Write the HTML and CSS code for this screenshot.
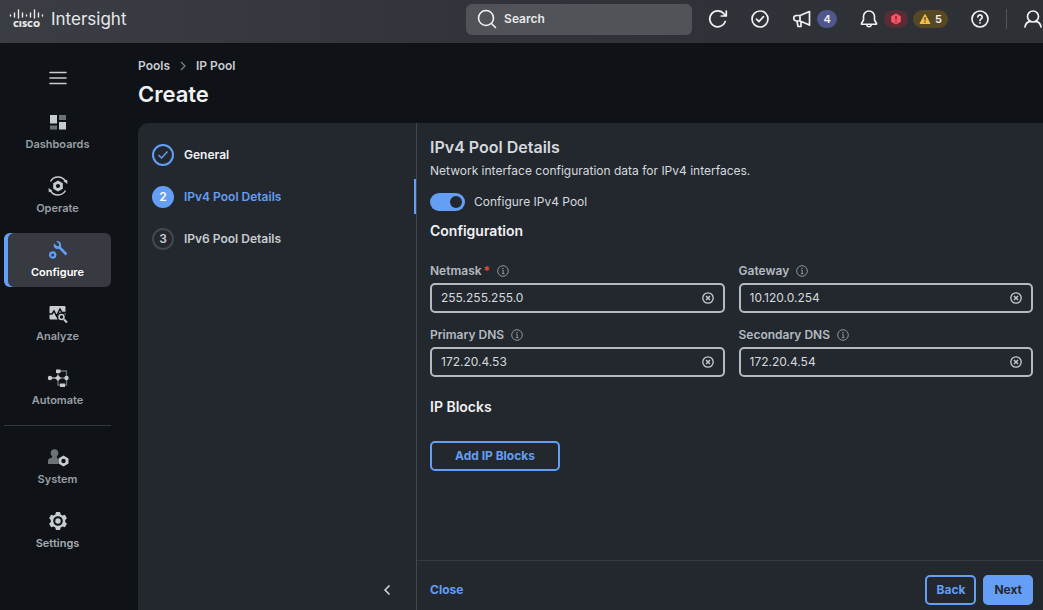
FILE: index.html
```html
<!DOCTYPE html>
<html lang="en">
<head>
    <meta charset="UTF-8">
    <meta name="viewport" content="width=device-width, initial-scale=1.0">
    <title>Create IP Pool</title>
    <link rel="stylesheet" href="styles.css">
</head>
<body>
    <!-- Shared icons -->
    <svg class="sprite" aria-hidden="true">
        <symbol id="info" viewBox="0 0 12 12">
            <circle cx="6" cy="6" r="5.3" fill="none" stroke="currentColor" />
            <path d="M5 5.2h1.2v3.3M4.8 8.6h2.7" fill="none" stroke="currentColor" />
            <circle cx="6" cy="3.4" r=".7" fill="currentColor" />
        </symbol>
        <symbol id="clear" viewBox="0 0 12 12">
            <circle cx="6" cy="6" r="5.2" fill="none" stroke="currentColor" stroke-width="1.3" />
            <path d="M4 4l4 4M8 4L4 8" fill="none" stroke="currentColor" stroke-width="1.4" />
        </symbol>
        <symbol id="gear" viewBox="0 0 20 20">
            <path fill="currentColor" fill-rule="evenodd" d="M8 1h4l.7 2.4 1.7 1 2.5-.6 2 3.4L17.2 9v2l1.7 1.8-2 3.4-2.5-.6-1.7 1L12 19H8l-.7-2.4-1.7-1-2.5.6-2-3.4L2.800 11V9L1.1 7.2l2-3.4 2.5.6 1.7-1zM10 5.2a4.8 4.8 0 1 0 0 9.6a4.8 4.8 0 0 0 0-9.6z" />
            <circle cx="10" cy="10" r="2.7" fill="currentColor" />
        </symbol>
    </svg>

    <header class="topbar">
        <a class="brand" href="#">
            <svg class="cisco" width="36" height="20" viewBox="0 0 36 20" role="img" aria-label="Cisco">
                <g stroke="#e6e8ea" stroke-width="1.4" stroke-linecap="round">
                    <path d="M1.5 6v1M5.5 4v4M9.5 1v8M13.5 4v4M17.5 6v1M21.5 4v4M25.5 1v8M29.5 4v4M33.5 6v1" />
                </g>
                <text class="cisco-name" x="17.5" y="18" text-anchor="middle">CISCO</text>
            </svg>
            <span class="product">Intersight</span>
        </a>
        <label class="search">
            <svg width="20" height="20" viewBox="0 0 20 20" fill="none" stroke="currentColor" stroke-width="1.6" stroke-linecap="round">
                <circle cx="9" cy="9" r="7.5" />
                <path d="M14.5 14.5l4 4" />
            </svg>
            <input type="text" placeholder="Search" aria-label="Search">
        </label>
        <div class="tools">
            <button class="tool" aria-label="Refresh">
                <svg width="20" height="20" viewBox="0 0 20 20" fill="none" stroke="currentColor" stroke-width="1.7" stroke-linecap="round" stroke-linejoin="round">
                    <path d="M17.3 12.5A8 8 0 1 1 16 4.800l2 2M18.3 2v5h-5" />
                </svg>
            </button>
            <button class="tool" aria-label="Tasks">
                <svg width="20" height="20" viewBox="0 0 20 20" fill="none" stroke="currentColor" stroke-width="1.7" stroke-linecap="round" stroke-linejoin="round">
                    <circle cx="10" cy="10" r="8" />
                    <path d="M6.5 10.2l2.4 2.4 4.6-5" />
                </svg>
            </button>
            <button class="tool" aria-label="Announcements">
                <svg width="20" height="20" viewBox="0 0 20 20" fill="none" stroke="currentColor" stroke-width="1.7" stroke-linejoin="round">
                    <path d="M8 6.500H4.500a2.700 2.700 0 0 0 0 5.500H8l9.500 4V2.500zM8 6.500V12M5 12l1 5.500h3V12.500M17.500 2v15" />
                </svg>
                <span class="badge violet">4</span>
            </button>
            <button class="tool" aria-label="Alarms">
                <svg width="20" height="20" viewBox="0 0 20 20" fill="none" stroke="currentColor" stroke-width="1.6" stroke-linejoin="round">
                    <path d="M4.500 11V7.500a5.500 5.500 0 0 1 11 0V11l2 3.500v.8h-15v-.8zM7.800 15.500c.2 3 4.200 3 4.400 0" />
                </svg>
                <span class="badge red">
                    <svg width="12" height="12" viewBox="0 0 12 12">
                        <path fill="#ff5264" d="M6 .5l4.800 2.700v5.600L6 11.500 1.200 8.800V3.200z" />
                        <path stroke="#5b2c35" stroke-width="1.4" d="M6 3v3.800M6 8v1.300" />
                    </svg>
                </span>
                <span class="badge amber">
                    <svg width="12" height="12" viewBox="0 0 12 12">
                        <path fill="#f5bd45" stroke="#f5bd45" stroke-linejoin="round" d="M6 1.500l5 9H1z" />
                        <path stroke="#4f4224" stroke-width="1.3" d="M6 4v3.500M6 8.500v1.300" />
                    </svg>
                    5
                </span>
            </button>
            <button class="tool" aria-label="Help">
                <svg width="20" height="20" viewBox="0 0 20 20" fill="none" stroke="currentColor" stroke-width="1.7" stroke-linecap="round">
                    <circle cx="10" cy="10" r="8" />
                    <path d="M7.800 8a2.200 2.200 0 1 1 3.400 1.900c-.8.5-1.200.8-1.200 1.500M10 13.900v.1" />
                </svg>
            </button>
            <button class="tool user" aria-label="Account">
                <svg width="20" height="20" viewBox="0 0 20 20" fill="none" stroke="currentColor" stroke-width="1.7" stroke-linecap="round">
                    <circle cx="10" cy="7.500" r="5.500" />
                    <path d="M2 18c.5-3.500 2.500-5.500 5.500-5.700M18 18c-.5-3.500-2.500-5.500-5.500-5.700" />
                </svg>
            </button>
        </div>
    </header>

    <div class="layout">
        <nav class="sidebar">
            <button class="menu" aria-label="Toggle menu">
                <svg width="18" height="14" viewBox="0 0 18 14" stroke="currentColor" stroke-width="1.6" stroke-linecap="round">
                    <path d="M1 1.500h16M1 7h16M1 12.500h16" />
                </svg>
            </button>
            <a class="nav-item" href="#">
                <svg width="20" height="20" viewBox="0 0 20 20" fill="#c8ccd1">
                    <path d="M2 3h7v8.500H2zM11 10h7v7.500h-7z" />
                    <path fill="#6d7277" d="M11 3h7v5h-7zM2 13.500h7v4H2z" />
                </svg>
                Dashboards
            </a>
            <a class="nav-item" href="#">
                <svg width="20" height="20" viewBox="0 0 20 20" fill="none" stroke="#c8ccd1" stroke-width="1.5">
                    <path d="M2.500 5.500a8.700 8.700 0 0 1 15-.3M17.500 14.500a8.700 8.700 0 0 1-15 .3" />
                    <path fill="#c8ccd1" stroke="none" d="M15.300 5l3.900-1.200.2 4.200zM4.700 15L.8 16.200.6 12z" />
                    <path fill="#c8ccd1" stroke="none" fill-rule="evenodd" d="M10 4.500l4.800 2.700v5.600L10 15.500l-4.800-2.700V7.200zM10 7.900a2.100 2.100 0 1 0 0 4.200a2.100 2.100 0 0 0 0-4.200z" />
                </svg>
                Operate
            </a>
            <a class="nav-item active" href="#">
                <svg width="20" height="20" viewBox="0 0 20 20" fill="none" stroke="#649ef5">
                    <circle cx="4.700" cy="15" r="2.600" stroke-width="2.200" />
                    <path fill="#649ef5" stroke="none" d="M8.300 1.200l2.900 2.900-.3 1.800-1.800.3-3-2.700C4.800 6.500 7 9.800 11 8.800l6.500 6.700 1.900-1.900-6.400-6.500C14 3.500 11.500.3 8.300 1.200z" />
                </svg>
                Configure
            </a>
            <a class="nav-item" href="#">
                <svg width="20" height="20" viewBox="0 0 20 20" fill="none">
                    <rect x="1.500" y="2" width="16" height="13.500" rx="1" fill="#c8ccd1" />
                    <path stroke="#0f1317" stroke-width="1.500" d="M1 10h3l2-3 2.500 5 3.500-7 2 3.500h4" />
                    <circle cx="13.500" cy="13" r="4" fill="#c8ccd1" stroke="#0f1317" stroke-width="1.500" />
                    <circle cx="13.500" cy="13" r="1.700" fill="#0f1317" />
                    <path stroke="#c8ccd1" stroke-width="2" d="M16 15.500l3 3" />
                </svg>
                Analyze
            </a>
            <a class="nav-item" href="#">
                <svg width="22" height="20" viewBox="0 0 22 20" fill="none">
                    <path stroke="#6d7277" stroke-width="1.300" d="M11 3h8.500v14H11V3M11 10h9" />
                    <path stroke="#c8ccd1" stroke-width="1.200" d="M3 10h8" />
                    <g fill="#c8ccd1">
                        <circle cx="3" cy="10" r="2.200" />
                        <circle cx="19.500" cy="10" r="2.200" />
                        <path d="M11 7l3 3-3 3-3-3zM9 1.500h4.500v3.500H9zM13 15.500h5v3.500h-5z" />
                    </g>
                </svg>
                Automate
            </a>
            <hr>
            <a class="nav-item" href="#">
                <svg width="22" height="20" viewBox="0 0 22 20" fill="none">
                    <circle cx="7.500" cy="6" r="3.800" fill="#6d7277" />
                    <path fill="#6d7277" d="M5.500 8h4l.5 2.500 1 2V17H1v-3.500c0-1.500 1.500-2.500 4-2.800z" />
                    <path fill="#c8ccd1" fill-rule="evenodd" d="M16.500 8.500l5 2.900v5.200l-5 2.900-5-2.900v-5.200zM16.500 11.800a2.200 2.200 0 1 0 0 4.400a2.200 2.200 0 0 0 0-4.400z" />
                </svg>
                System
            </a>
            <a class="nav-item settings" href="#">
                <svg width="20" height="20"><use href="#gear" /></svg>
                Settings
            </a>
        </nav>

        <main>
            <div class="breadcrumb">
                <a href="#">Pools</a>
                <svg width="8" height="10" viewBox="0 0 8 10" fill="none" stroke="#7d838a" stroke-width="1.200"><path d="M2 1l4 4-4 4" /></svg>
                <a href="#">IP Pool</a>
            </div>
            <h1>Create</h1>

            <div class="panel">
                <aside class="steps">
                    <ol>
                        <li class="step done">
                            <span class="dot">
                                <svg width="12" height="10" viewBox="0 0 12 10" fill="none" stroke="currentColor" stroke-width="1.400"><path d="M1.500 5l3 3L10.500 1.500" /></svg>
                            </span>
                            General
                        </li>
                        <li class="step current"><span class="dot">2</span>IPv4 Pool Details</li>
                        <li class="step"><span class="dot">3</span>IPv6 Pool Details</li>
                    </ol>
                    <button class="collapse" aria-label="Collapse steps">
                        <svg width="8" height="12" viewBox="0 0 8 12" fill="none" stroke="currentColor" stroke-width="1.500"><path d="M6.500 1.500L2 6l4.500 4.500" /></svg>
                    </button>
                </aside>

                <form class="details">
                    <div class="content">
                        <h2>IPv4 Pool Details</h2>
                        <p>Network interface configuration data for IPv4 interfaces.</p>
                        <label class="toggle">
                            <input type="checkbox" checked>
                            Configure IPv4 Pool
                        </label>

                        <h3>Configuration</h3>
                        <div class="fields">
                            <div class="field">
                                <div class="field-label">
                                    <label for="netmask">Netmask<span class="required">*</span></label>
                                    <svg width="12" height="12"><use href="#info" /></svg>
                                </div>
                                <div class="box">
                                    <input type="text" id="netmask" value="255.255.255.0" required>
                                    <button type="button" aria-label="Clear netmask"><svg width="12" height="12"><use href="#clear" /></svg></button>
                                </div>
                            </div>
                            <div class="field">
                                <div class="field-label">
                                    <label for="gateway">Gateway</label>
                                    <svg width="12" height="12"><use href="#info" /></svg>
                                </div>
                                <div class="box">
                                    <input type="text" id="gateway" value="10.120.0.254">
                                    <button type="button" aria-label="Clear gateway"><svg width="12" height="12"><use href="#clear" /></svg></button>
                                </div>
                            </div>
                            <div class="field">
                                <div class="field-label">
                                    <label for="primary-dns">Primary DNS</label>
                                    <svg width="12" height="12"><use href="#info" /></svg>
                                </div>
                                <div class="box">
                                    <input type="text" id="primary-dns" value="172.20.4.53">
                                    <button type="button" aria-label="Clear primary DNS"><svg width="12" height="12"><use href="#clear" /></svg></button>
                                </div>
                            </div>
                            <div class="field">
                                <div class="field-label">
                                    <label for="secondary-dns">Secondary DNS</label>
                                    <svg width="12" height="12"><use href="#info" /></svg>
                                </div>
                                <div class="box">
                                    <input type="text" id="secondary-dns" value="172.20.4.54">
                                    <button type="button" aria-label="Clear secondary DNS"><svg width="12" height="12"><use href="#clear" /></svg></button>
                                </div>
                            </div>
                        </div>

                        <h3 class="blocks">IP Blocks</h3>
                        <button type="button" class="button add">Add IP Blocks</button>
                    </div>
                    <footer class="actions">
                        <button type="button" class="close">Close</button>
                        <button type="button" class="button">Back</button>
                        <button type="submit" class="button primary">Next</button>
                    </footer>
                </form>
            </div>
        </main>
    </div>
</body>
</html>
```
FILE: styles.css
```css
* {
    box-sizing: border-box;
}
body {
    margin: 0;
    height: 100vh;
    display: flex;
    flex-direction: column;
    overflow: hidden;
    font-family: Inter, "Liberation Sans", sans-serif;
    font-size: 12px;
    line-height: 16px;
    color: #d5d9de;
    background-color: #0f1317;
}
a {
    color: inherit;
    text-decoration: none;
}
button,
input {
    font: inherit;
    color: inherit;
}
button {
    padding: 0;
    border: none;
    background: none;
    cursor: pointer;
}
svg {
    display: block;
    flex-shrink: 0;
}
.sprite {
    display: none;
}

/* Top bar */
.topbar {
    flex: none;
    height: 43px;
    display: grid;
    grid-template-columns: 1fr 226px auto;
    column-gap: 16px;
    padding: 0 0 5px 9px;
    align-items: center;
    background: linear-gradient(to right, #3a3e44, #30343a 50%, #2d3136);
    color: #f0f1f3;
}
.brand {
    display: flex;
    align-items: center;
    gap: 6px;
}
.cisco-name {
    font-family: "Open Sans", sans-serif;
    font-size: 9px;
    font-weight: 800;
    fill: #e6e8ea;
}
.product {
    font-size: 17px;
    line-height: 20px;
    color: #e6e8ea;
}
.search {
    height: 31px;
    display: flex;
    align-items: center;
    gap: 7px;
    padding: 0 11px;
    border-radius: 6px;
    background-color: #505358;
}
.search input {
    flex: 1;
    min-width: 0;
    padding: 0;
    border: none;
    outline: none;
    background: none;
    font-weight: 600;
}
.search input::placeholder {
    color: #e6e8ea;
    opacity: 1;
}
.tools {
    display: flex;
    align-items: center;
    gap: 22px;
}
.tool {
    height: 20px;
    display: flex;
    align-items: center;
    gap: 5px;
}
.user {
    margin-left: -6px;
    padding-left: 16px;
    border-left: 1px solid #50555b;
}
.badge {
    height: 18px;
    min-width: 20px;
    display: flex;
    align-items: center;
    justify-content: center;
    gap: 4px;
    padding: 0 5px;
    border-radius: 9px;
    font-size: 11px;
    font-weight: 600;
}
.violet {
    background-color: #50578c;
}
.red {
    padding: 0 6px;
    background-color: #5b2c35;
}
.amber {
    padding: 0 6px;
    background-color: #564823;
}

/* Side navigation */
.layout {
    flex: 1;
    min-height: 0;
    display: flex;
}
.sidebar {
    flex: none;
    width: 138px;
    padding: 25px 27px 0 4px;
    display: flex;
    flex-direction: column;
    gap: 10px;
}
.menu {
    height: 20px;
    margin-bottom: 7px;
    display: flex;
    align-items: center;
    justify-content: center;
    color: #c8ccd1;
}
.nav-item {
    height: 54px;
    display: flex;
    flex-direction: column;
    align-items: center;
    justify-content: center;
    gap: 4px;
    border-radius: 6px;
    font-size: 11px;
    font-weight: 600;
    color: #9a9fa5;
}
.nav-item.active {
    color: #fff;
    background-color: #373b41;
    box-shadow: inset 4px 0 #649ef5;
}
.settings {
    color: #a6abb1;
}
.settings svg {
    color: #c8ccd1;
}
.sidebar hr {
    width: 100%;
    margin: 0 0 4px;
    border: none;
    border-top: 1px solid #34393e;
}

/* Page */
main {
    flex: 1;
    min-width: 0;
    padding-top: 15px;
    display: flex;
    flex-direction: column;
}
.breadcrumb {
    display: flex;
    align-items: center;
    gap: 9px;
    font-weight: 600;
    color: #c8ccd1;
}
h1 {
    margin: 6px 0 15px;
    font-size: 22px;
    line-height: 28px;
    font-weight: 600;
    color: #f0f1f3;
}
.panel {
    flex: 1;
    min-height: 0;
    display: flex;
    border-radius: 10px 0 0 0;
    background-color: #23282e;
}
.steps {
    flex: none;
    width: 279px;
    padding: 14px 0 10px 14px;
    display: flex;
    flex-direction: column;
    justify-content: space-between;
    border-right: 1px solid #43484e;
}
.steps ol {
    margin: 0;
    padding: 0;
    display: flex;
    flex-direction: column;
    gap: 7px;
    list-style: none;
}
.step {
    height: 35px;
    display: flex;
    align-items: center;
    gap: 10px;
    font-weight: 600;
    color: #c8ccd1;
}
.dot {
    width: 22px;
    height: 22px;
    display: flex;
    align-items: center;
    justify-content: center;
    border: 2px solid #43484e;
    border-radius: 50%;
}
.done {
    color: #f0f1f3;
}
.done .dot {
    border-color: #649ef5;
    color: #649ef5;
}
.current {
    color: #649ef5;
    border-right: 2px solid #649ef5;
}
.current .dot {
    border-color: #649ef5;
    background-color: #649ef5;
    color: #fff;
}
.collapse {
    align-self: flex-end;
    height: 20px;
    padding: 0 25px;
}

/* Form */
.details {
    flex: 1;
    min-width: 0;
    display: flex;
    flex-direction: column;
}
.content {
    flex: 1;
    padding: 14px 10px 0 13px;
}
h2,
h3,
p {
    margin: 0;
}
h2 {
    font-size: 16px;
    line-height: 20px;
    font-weight: 600;
}
h3 {
    font-size: 14px;
    line-height: 20px;
    font-weight: 600;
    color: #f0f1f3;
}
p {
    padding: 6px 0 14px;
}
.toggle {
    height: 18px;
    margin-bottom: 10px;
    display: flex;
    align-items: center;
    gap: 9px;
}
.toggle input {
    appearance: none;
    width: 35px;
    height: 18px;
    margin: 0;
    display: flex;
    align-items: center;
    justify-content: flex-end;
    padding: 0 3px;
    border-radius: 9px;
    background-color: #4b5057;
}
.toggle input:checked {
    background-color: #649ef5;
}
.toggle input::before {
    content: "";
    width: 12px;
    height: 12px;
    border-radius: 50%;
    background-color: #23282e;
}
.fields {
    display: grid;
    grid-template-columns: 1fr 1fr;
    gap: 14px;
    padding: 22px 0 20px;
}
.field-label {
    display: flex;
    align-items: center;
    gap: 7px;
    margin-bottom: 4px;
    color: #8f959c;
}
.field-label label {
    font-weight: 600;
    color: #b4bac1;
}
.required {
    margin-left: 2px;
    color: #e5484d;
}
.box {
    height: 30px;
    display: flex;
    align-items: center;
    padding: 0 9px;
    border: 2px solid #b4bac1;
    border-radius: 5px;
}
.box input {
    flex: 1;
    min-width: 0;
    padding: 0;
    border: none;
    outline: none;
    background: none;
}
.box button {
    color: #c8ccd1;
}
.blocks {
    margin-bottom: 24px;
}
.button {
    height: 30px;
    padding: 0 9px;
    border: 2px solid #649ef5;
    border-radius: 5px;
    font-weight: 700;
    color: #649ef5;
}
.add {
    padding: 0 23px;
}
.primary {
    color: #23282e;
    background-color: #649ef5;
}
.actions {
    display: flex;
    align-items: center;
    gap: 7px;
    padding: 14px 10px 5px 13px;
    border-top: 1px solid #363b41;
}
.close {
    margin-right: auto;
    font-weight: 700;
    color: #649ef5;
}
```
